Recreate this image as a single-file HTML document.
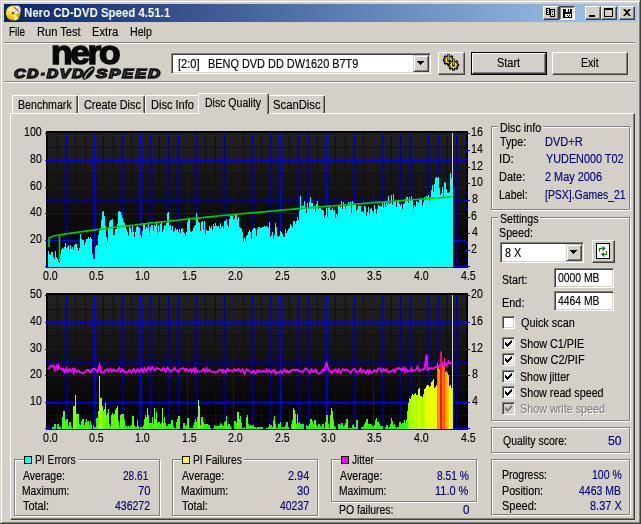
<!DOCTYPE html>
<html><head><meta charset="utf-8"><title>Nero CD-DVD Speed 4.51.1</title>
<style>
html,body{margin:0;padding:0}
body{width:641px;height:524px;overflow:hidden;background:#d4d0c8;position:relative;font-family:"Liberation Sans",sans-serif;font-size:11px;color:#000;line-height:13px}
.a{position:absolute;white-space:nowrap}
.t{position:absolute;white-space:nowrap;height:13px;line-height:13px;font-size:12px;transform-origin:0 0;-webkit-text-stroke:.15px}
.b{color:#00007b}
.r{text-align:right;transform-origin:100% 50% !important}
.ch{position:absolute;left:0;top:0}
.hl{position:absolute;height:1px}
.grp{position:absolute;box-sizing:border-box;border:1px solid #808080;box-shadow:1px 1px 0 #fff, inset 1px 1px 0 #fff}
.btn{position:absolute;box-sizing:border-box;background:#d4d0c8;border:1px solid;border-color:#fff #404040 #404040 #fff;box-shadow:inset -1px -1px 0 #808080, inset 1px 1px 0 #d4d0c8}
.sunk{position:absolute;box-sizing:border-box;background:#fff;border:1px solid;border-color:#808080 #fff #fff #808080;box-shadow:inset 1px 1px 0 #404040, inset -1px -1px 0 #d4d0c8}
.cb{position:absolute;box-sizing:border-box;width:13px;height:13px;background:#fff;border:1px solid;border-color:#808080 #fff #fff #808080;box-shadow:inset 1px 1px 0 #404040, inset -1px -1px 0 #d4d0c8}

.tab{position:absolute;box-sizing:border-box;background:#d4d0c8;border:1px solid;border-color:#fff #404040 transparent #fff;border-bottom:none;border-radius:2px 2px 0 0;box-shadow:inset -1px 0 0 #808080}
.tab.sel{z-index:2}
.sq{position:absolute;width:8px;height:8px;border:1px solid #000;box-sizing:border-box}
.gap{position:absolute;height:2px;background:#d4d0c8}
.btn2{position:absolute;box-sizing:border-box;background:#d4d0c8;border:1px solid;border-color:#d4d0c8 #404040 #404040 #d4d0c8;box-shadow:inset 1px 1px 0 #fff, inset -1px -1px 0 #808080}
.cb.dis{background:#d4d0c8}
</style></head><body>
<!-- window frame -->
<div class="a" style="left:0;top:0;width:640px;height:523px;border-right:1px solid #404040;border-bottom:1px solid #404040"></div>
<div class="a" style="left:1px;top:1px;width:638px;height:521px;border-top:1px solid #fff;border-left:1px solid #fff;border-right:1px solid #808080;border-bottom:1px solid #808080;box-sizing:border-box;width:639px;height:522px"></div>
<!-- title bar -->
<div class="a" style="left:4px;top:4px;width:633px;height:18px;background:linear-gradient(90deg,#0a246a,#a6caf0)"></div>
<div class="a" id="ttl" style="will-change:transform;left:24px;top:5px;height:16px;line-height:16px;font-size:13px;font-weight:bold;color:#fff;transform-origin:0 50%;transform:scaleX(.88)">Nero CD-DVD Speed 4.51.1</div>
<svg class="a" style="left:5px;top:4px" width="17" height="18" viewBox="0 0 17 18"><defs><radialGradient id="gd" cx=".35" cy=".35" r=".8"><stop offset="0" stop-color="#fff27a"/><stop offset=".55" stop-color="#f4c400"/><stop offset="1" stop-color="#b87f00"/></radialGradient></defs><circle cx="8.2" cy="9" r="7.4" fill="url(#gd)"/><path d="M8.2 9L1.5 6A7.4 7.4 0 0 1 6 2Z" fill="#fff68c" opacity=".8"/><path d="M8.2 9L14 14.5A7.4 7.4 0 0 1 9 16.4Z" fill="#fff68c" opacity=".8"/><circle cx="8.2" cy="9" r="1.3" fill="#3a3a5a"/><circle cx="11.6" cy="5.6" r="4.1" fill="#e8e4e0"/><circle cx="11.6" cy="5.6" r="3" fill="#fff"/><path d="M9.3 3.2L13.8 7.6" stroke="#e03010" stroke-width="1.3"/><circle cx="10" cy="7.4" r=".7" fill="#f07040"/><circle cx="13.6" cy="4" r=".7" fill="#f07040"/></svg>
<!-- caption buttons -->
<div class="btn" style="left:543px;top:6px;width:16px;height:14px"></div>
<div class="a" style="left:559px;top:6px;width:16px;height:14px;box-sizing:border-box;background:#ebe9e5;border:1px solid;border-color:#404040 #fff #fff #404040;box-shadow:inset 1px 1px 0 #808080"></div>
<div class="btn" style="left:585px;top:6px;width:16px;height:14px"></div>
<div class="btn" style="left:601px;top:6px;width:16px;height:14px"></div>
<div class="btn" style="left:619px;top:6px;width:16px;height:14px"></div>
<svg class="a" style="left:543px;top:6px" width="92" height="14" viewBox="543 6 92 14" shape-rendering="crispEdges"><path d="M589 15h6v2h-6zM604 8h9v9h-9zM605 10v6h7v-6z" fill="#000" fill-rule="evenodd"/><path d="M623 9h2l2 2 2-2h2l-3 3.5 3 3.500h-2l-2-2-2 2h-2l3-3.500z" fill="#000" shape-rendering="auto"/><path d="M546 8h4v7h-4zM547 9v5h2v-5zM547 10h1v1h-1zM547 12h1v1h-1zM550 9h5v8h-5zM551 10v6h3v-6zM552 11h1v1h-1zM552 14h1v1h-1z" fill="#000" fill-rule="evenodd"/><path d="M563 9h9v9h-9zM566 9h2v3h-2zM569 9h1v3h-1zM565 14h6v3h-6zM567 15h1v1h-1zM569 15h1v1h-1zM568 16h1v1h-1z" fill="#000" fill-rule="evenodd"/></svg>
<!-- menu -->




<div class="hl" style="left:4px;top:42px;width:631px;background:#808080"></div>
<div class="hl" style="left:4px;top:43px;width:631px;background:#fff"></div>
<div class="hl" style="left:4px;top:81px;width:631px;background:#808080"></div>
<div class="hl" style="left:4px;top:82px;width:631px;background:#fff"></div>
<!-- logo -->
<div class="a" id="nero" style="will-change:transform;left:51px;top:35px;font-size:33px;line-height:35px;font-weight:bold;letter-spacing:-2.2px;color:#0a0a0a;-webkit-text-stroke:1.5px #0a0a0a;text-shadow:0 0 2px #f4f2ee;transform-origin:0 0;transform:scaleX(1.07)">nero</div>
<div class="a" id="cds" style="will-change:transform;left:14px;top:67px;font-size:12.500px;line-height:15px;font-weight:bold;font-style:italic;letter-spacing:1.2px;color:#606060;-webkit-text-stroke:1.35px #101010;transform-origin:0 0;transform:scaleX(1.27)">CD&middot;DVD</div>
<div class="a" id="spd" style="will-change:transform;left:96px;top:67px;font-size:12.500px;line-height:15px;font-weight:bold;font-style:italic;letter-spacing:1.2px;color:#606060;-webkit-text-stroke:1.35px #101010;transform-origin:0 0;transform:scaleX(1.36)">SPEED</div>
<svg class="a" style="left:79px;top:65px" width="19" height="16" viewBox="79 65 19 16"><ellipse cx="88.500" cy="73" rx="8.300" ry="3.700" transform="rotate(-48 88.500 73)" fill="#111"/><path d="M84.500 78.500C86 74.500 89 71 93 68.300" stroke="#d4d0c8" stroke-width="1.300" fill="none"/></svg>
<!-- toolbar -->
<div class="sunk" style="left:171px;top:53px;width:260px;height:21px"></div>

<div class="btn2" style="left:413px;top:55px;width:16px;height:17px"></div>
<div class="btn" style="left:438px;top:52px;width:27px;height:23px"></div>
<div class="a" style="left:471px;top:52px;width:76px;height:23px;border:1px solid #000;box-sizing:border-box"></div>
<div class="btn" style="left:472px;top:53px;width:74px;height:21px"></div>

<div class="btn" style="left:552px;top:52px;width:76px;height:23px"></div>

<!-- tab page -->
<div class="a" style="left:10px;top:113px;width:625px;height:407px;box-sizing:border-box;border:1px solid;border-color:#fff #404040 #404040 #fff;box-shadow:inset -1px -1px 0 #808080"></div>
<svg class="ch" width="641" height="524" viewBox="0 0 641 524" shape-rendering="crispEdges">
<defs><linearGradient id="bga" x1="0" y1="0" x2="0" y2="1"><stop offset="0" stop-color="#222"/><stop offset="1" stop-color="#000"/></linearGradient><linearGradient id="bgb" x1="0" y1="0" x2="0" y2="1"><stop offset="0" stop-color="#222"/><stop offset="1" stop-color="#000"/></linearGradient></defs>
<rect x="46" y="131" width="422" height="137" fill="#000"/>
<rect x="48" y="133" width="418" height="134" fill="url(#bga)"/>
<path d="M57 133v134M66 133v134M75 133v134M85 133v134M94 133v134M103 133v134M113 133v134M122 133v134M131 133v134M140 133v134M150 133v134M159 133v134M168 133v134M178 133v134M187 133v134M196 133v134M205 133v134M215 133v134M224 133v134M233 133v134M243 133v134M252 133v134M261 133v134M270 133v134M280 133v134M289 133v134M298 133v134M308 133v134M317 133v134M326 133v134M335 133v134M345 133v134M354 133v134M363 133v134M373 133v134M382 133v134M391 133v134M400 133v134M410 133v134M419 133v134M428 133v134M438 133v134M447 133v134M456 133v134" stroke="#000090" stroke-width="1" transform="translate(.5,0)"/>
<path d="M94 133v134M140 133v134M187 133v134M233 133v134M280 133v134M326 133v134M373 133v134M419 133v134" stroke="#0000ff" stroke-width="1" transform="translate(.5,0)"/>
<path d="M46 266h420M46 253h420M46 240h420M46 227h420M46 213h420M46 200h420M46 187h420M46 173h420M46 160h420M46 147h420M46 133h420" stroke="#000090" stroke-width="1" transform="translate(0,.5)"/>
<path d="M45 266h421M45 240h421M45 213h421M45 187h421M45 160h421M45 133h421" stroke="#0000ff" stroke-width="1" transform="translate(0,.5)"/>
<path d="M466 266h4M466 258h2M466 250h4M466 242h2M466 233h4M466 225h2M466 217h4M466 208h2M466 200h4M466 192h2M466 183h4M466 175h2M466 167h4M466 158h2M466 150h4M466 142h2M466 133h4" stroke="#0000ff" stroke-width="1" transform="translate(0,.5)"/>
<rect x="452" y="133" width="1" height="134" fill="#d0d0d0"/>
<path d="M48 267V251h1V254h1V255h1V252h1V252h1V257h1V259h1V251h1V257h1V259h1V262h1V263h1V254h1V250h1V248h1V249h1V247h1V243h1V248h1V247h1V245h1V250h1V245h1V249h1V247h1V250h1V245h1V244h1V244h1V248h1V251h1V248h1V234h1V239h1V240h1V240h1V245h1V242h1V239h1V239h1V237h1V239h1V237h1V239h1V254h1V259h1V259h1V247h1V245h1V246h1V235h1V231h1V228h1V220h1V212h1V211h1V216h1V226h1V237h1V242h1V227h1V222h1V220h1V220h1V219h1V235h1V235h1V229h1V229h1V224h1V212h1V211h1V212h1V215h1V218h1V222h1V223h1V227h1V229h1V232h1V236h1V226h1V228h1V232h1V226h1V232h1V237h1V232h1V227h1V226h1V227h1V228h1V235h1V238h1V231h1V223h1V223h1V229h1V227h1V228h1V224h1V233h1V227h1V225h1V225h1V231h1V225h1V226h1V223h1V233h1V225h1V232h1V224h1V222h1V232h1V229h1V225h1V226h1V223h1V213h1V212h1V226h1V225h1V230h1V226h1V232h1V231h1V228h1V230h1V229h1V232h1V229h1V233h1V229h1V228h1V232h1V233h1V236h1V232h1V222h1V218h1V219h1V231h1V232h1V231h1V228h1V226h1V225h1V213h1V219h1V222h1V223h1V231h1V222h1V221h1V230h1V221h1V235h1V230h1V231h1V231h1V226h1V228h1V226h1V230h1V224h1V226h1V223h1V226h1V227h1V226h1V229h1V223h1V228h1V226h1V229h1V221h1V221h1V219h1V225h1V227h1V219h1V216h1V216h1V216h1V220h1V219h1V215h1V215h1V220h1V217h1V227h1V228h1V229h1V232h1V242h1V238h1V241h1V236h1V235h1V232h1V230h1V232h1V239h1V230h1V228h1V228h1V229h1V236h1V229h1V227h1V227h1V228h1V228h1V227h1V227h1V226h1V227h1V226h1V227h1V228h1V222h1V237h1V235h1V232h1V239h1V235h1V223h1V227h1V236h1V237h1V236h1V231h1V232h1V234h1V237h1V237h1V229h1V233h1V231h1V229h1V228h1V224h1V226h1V228h1V221h1V221h1V224h1V221h1V217h1V220h1V211h1V196h1V207h1V206h1V206h1V201h1V209h1V213h1V203h1V208h1V202h1V197h1V203h1V203h1V209h1V206h1V212h1V204h1V201h1V209h1V208h1V208h1V210h1V210h1V211h1V218h1V215h1V208h1V217h1V208h1V207h1V210h1V210h1V208h1V211h1V210h1V218h1V214h1V217h1V205h1V206h1V207h1V201h1V209h1V202h1V204h1V209h1V206h1V206h1V202h1V204h1V202h1V213h1V201h1V204h1V204h1V205h1V211h1V209h1V206h1V206h1V206h1V212h1V211h1V213h1V206h1V207h1V216h1V212h1V207h1V214h1V209h1V208h1V211h1V213h1V205h1V209h1V214h1V209h1V205h1V206h1V206h1V207h1V203h1V208h1V202h1V207h1V202h1V205h1V196h1V204h1V203h1V195h1V205h1V194h1V202h1V201h1V207h1V200h1V201h1V204h1V206h1V204h1V209h1V204h1V203h1V199h1V197h1V197h1V203h1V197h1V199h1V196h1V199h1V209h1V205h1V207h1V201h1V202h1V203h1V199h1V198h1V199h1V206h1V202h1V197h1V199h1V196h1V197h1V195h1V201h1V197h1V190h1V185h1V192h1V184h1V178h1V177h1V178h1V177h1V188h1V195h1V193h1V187h1V198h1V182h1V183h1V189h1V193h1V193h1V192h1V173h1V178h1V186h1V267Z" fill="#00ffff"/>
<path d="M49 247 L49 238 L51 237 L53 236.0 L56 235.5 L59 235.1 L62 234.6 L65 234.1 L68 233.7 L71 233.2 L74 232.8 L77 232.4 L80 231.9 L83 231.5 L86 231.1 L89 230.7 L92 230.3 L95 229.9 L98 229.5 L101 229.1 L104 228.7 L107 228.3 L110 227.9 L113 227.5 L116 227.2 L119 226.8 L122 226.4 L125 226.1 L128 225.7 L131 225.3 L134 225.0 L137 224.6 L140 224.3 L143 223.9 L146 223.6 L149 223.2 L152 222.9 L155 222.6 L158 222.2 L161 221.9 L164 221.6 L167 221.3 L170 220.9 L173 220.6 L176 220.3 L179 220.0 L182 219.7 L185 219.3 L188 219.0 L191 218.7 L194 218.4 L197 218.1 L200 217.8 L203 217.5 L206 217.2 L209 216.9 L212 216.6 L215 216.3 L218 216.0 L221 215.7 L224 215.4 L227 215.2 L230 214.9 L233 214.6 L236 214.3 L239 214.0 L242 213.7 L245 213.5 L248 213.2 L251 212.9 L254 212.6 L257 212.4 L260 212.1 L263 211.8 L266 211.6 L269 211.3 L272 211.0 L275 210.8 L278 210.5 L281 210.2 L284 210.0 L287 209.7 L290 209.5 L293 209.2 L296 208.9 L299 208.7 L302 208.4 L305 208.2 L308 207.9 L311 207.7 L314 207.4 L317 207.2 L320 206.9 L323 206.7 L326 206.4 L329 206.2 L332 206.0 L335 205.7 L338 205.5 L341 205.2 L344 205.0 L347 204.8 L350 204.5 L353 204.3 L356 204.0 L359 203.8 L362 203.6 L365 203.3 L368 203.1 L371 202.9 L374 202.6 L377 202.4 L380 202.2 L383 202.0 L386 201.7 L389 201.5 L392 201.3 L395 201.1 L398 200.8 L401 200.6 L404 200.4 L407 200.2 L410 199.9 L413 199.7 L416 199.5 L419 199.3 L422 199.1 L425 198.8 L428 198.6 L431 198.4 L434 198.2 L437 198.0 L440 197.8 L443 197.6 L446 197.3 L449 197.1 L452 196.9" fill="none" stroke="#00cc00" stroke-width="1.7" shape-rendering="auto"/>
<path d="M59.5 236V261" fill="none" stroke="#00cc00" stroke-width="1.7" shape-rendering="auto"/>
<rect x="46" y="293" width="422" height="137" fill="#000"/>
<rect x="48" y="295" width="418" height="134" fill="url(#bgb)"/>
<path d="M57 295v134M66 295v134M75 295v134M85 295v134M94 295v134M103 295v134M113 295v134M122 295v134M131 295v134M140 295v134M150 295v134M159 295v134M168 295v134M178 295v134M187 295v134M196 295v134M205 295v134M215 295v134M224 295v134M233 295v134M243 295v134M252 295v134M261 295v134M270 295v134M280 295v134M289 295v134M298 295v134M308 295v134M317 295v134M326 295v134M335 295v134M345 295v134M354 295v134M363 295v134M373 295v134M382 295v134M391 295v134M400 295v134M410 295v134M419 295v134M428 295v134M438 295v134M447 295v134M456 295v134" stroke="#000090" stroke-width="1" transform="translate(.5,0)"/>
<path d="M94 295v134M140 295v134M187 295v134M233 295v134M280 295v134M326 295v134M373 295v134M419 295v134" stroke="#0000ff" stroke-width="1" transform="translate(.5,0)"/>
<path d="M46 428h420M46 415h420M46 402h420M46 389h420M46 375h420M46 362h420M46 349h420M46 335h420M46 322h420M46 309h420M46 295h420" stroke="#000090" stroke-width="1" transform="translate(0,.5)"/>
<path d="M45 428h421M45 402h421M45 375h421M45 349h421M45 322h421M45 295h421" stroke="#0000ff" stroke-width="1" transform="translate(0,.5)"/>
<path d="M466 428h4M466 415h2M466 402h4M466 389h2M466 375h4M466 362h2M466 349h4M466 335h2M466 322h4M466 309h2M466 295h4" stroke="#0000ff" stroke-width="1" transform="translate(0,.5)"/>
<rect x="452" y="295" width="1" height="134" fill="#d0d0d0"/>
<path d="M52 429v-2h1v2zM53 429v-2h1v2zM59 429v-2h1v2zM60 429v-2h1v2zM71 429v-2h1v2zM94 429v-2h1v2zM95 429v-2h1v2zM127 429v-2h1v2zM129 429v-2h1v2zM135 429v-2h1v2zM136 429v-2h1v2zM140 429v-2h1v2zM141 429v-2h1v2zM142 429v-2h1v2zM244 429v-2h1v2zM254 429v-2h1v2zM255 429v-2h1v2zM257 429v-2h1v2zM258 429v-2h1v2zM259 429v-2h1v2zM260 429v-2h1v2zM261 429v-2h1v2zM262 429v-2h1v2zM268 429v-2h1v2zM272 429v-2h1v2zM282 429v-2h1v2zM283 429v-2h1v2zM284 429v-2h1v2zM288 429v-2h1v2zM317 429v-2h1v2zM321 429v-2h1v2zM335 429v-2h1v2zM343 429v-2h1v2zM354 429v-2h1v2zM355 429v-2h1v2zM361 429v-2h1v2zM362 429v-2h1v2zM373 429v-2h1v2zM385 429v-2h1v2zM389 429v-2h1v2zM395 429v-2h1v2zM397 429v-2h1v2zM398 429v-2h1v2z" fill="#0aff00"/>
<path d="M54 429v-5h1v5zM55 429v-5h1v5zM57 429v-5h1v5zM58 429v-5h1v5zM79 429v-5h1v5zM109 429v-5h1v5zM153 429v-5h1v5zM160 429v-5h1v5zM168 429v-5h1v5zM169 429v-5h1v5zM170 429v-5h1v5zM204 429v-5h1v5zM205 429v-5h1v5zM206 429v-5h1v5zM207 429v-5h1v5zM221 429v-5h1v5zM228 429v-5h1v5zM229 429v-5h1v5zM248 429v-5h1v5zM269 429v-5h1v5zM275 429v-5h1v5zM278 429v-5h1v5zM279 429v-5h1v5zM291 429v-5h1v5zM296 429v-5h1v5zM300 429v-5h1v5zM301 429v-5h1v5zM302 429v-5h1v5zM303 429v-5h1v5zM309 429v-5h1v5zM313 429v-5h1v5zM318 429v-5h1v5zM319 429v-5h1v5zM322 429v-5h1v5zM323 429v-5h1v5zM328 429v-5h1v5zM338 429v-5h1v5zM339 429v-5h1v5zM353 429v-5h1v5zM364 429v-5h1v5zM368 429v-5h1v5zM369 429v-5h1v5zM370 429v-5h1v5zM379 429v-5h1v5zM390 429v-5h1v5zM394 429v-5h1v5zM401 429v-5h1v5z" fill="#1aff00"/>
<path d="M62 429v-12h1v12zM146 429v-12h1v12zM152 429v-12h1v12zM164 429v-12h1v12zM197 429v-12h1v12zM201 429v-12h1v12zM202 429v-12h1v12zM246 429v-12h1v12z" fill="#3fff00"/>
<path d="M63 429v-18h1v18zM64 429v-18h1v18zM98 429v-18h1v18zM103 429v-18h1v18zM332 429v-18h1v18zM407 429v-18h1v18z" fill="#5fff00"/>
<path d="M65 429v-8h1v8zM81 429v-8h1v8zM88 429v-8h1v8zM90 429v-8h1v8zM118 429v-8h1v8zM225 429v-8h1v8zM234 429v-8h1v8zM235 429v-8h1v8zM312 429v-8h1v8zM392 429v-8h1v8z" fill="#2aff00"/>
<path d="M66 429v-10h1v10zM67 429v-10h1v10zM82 429v-10h1v10zM83 429v-10h1v10zM86 429v-10h1v10zM144 429v-10h1v10zM155 429v-10h1v10zM177 429v-10h1v10zM195 429v-10h1v10zM239 429v-10h1v10zM310 429v-10h1v10zM311 429v-10h1v10zM346 429v-10h1v10zM347 429v-10h1v10zM366 429v-10h1v10zM367 429v-10h1v10z" fill="#35ff00"/>
<path d="M68 429v-3h1v3zM110 429v-3h1v3zM119 429v-3h1v3zM125 429v-3h1v3zM126 429v-3h1v3zM128 429v-3h1v3zM130 429v-3h1v3zM134 429v-3h1v3zM138 429v-3h1v3zM166 429v-3h1v3zM167 429v-3h1v3zM173 429v-3h1v3zM185 429v-3h1v3zM215 429v-3h1v3zM216 429v-3h1v3zM217 429v-3h1v3zM218 429v-3h1v3zM219 429v-3h1v3zM223 429v-3h1v3zM227 429v-3h1v3zM230 429v-3h1v3zM249 429v-3h1v3zM251 429v-3h1v3zM307 429v-3h1v3zM308 429v-3h1v3zM320 429v-3h1v3zM334 429v-3h1v3zM363 429v-3h1v3zM372 429v-3h1v3zM380 429v-3h1v3zM381 429v-3h1v3zM382 429v-3h1v3z" fill="#0fff00"/>
<path d="M69 429v-7h1v7zM70 429v-7h1v7zM85 429v-7h1v7zM87 429v-7h1v7zM158 429v-7h1v7zM159 429v-7h1v7zM176 429v-7h1v7zM194 429v-7h1v7zM196 429v-7h1v7zM203 429v-7h1v7zM224 429v-7h1v7zM280 429v-7h1v7zM286 429v-7h1v7zM287 429v-7h1v7zM299 429v-7h1v7zM325 429v-7h1v7zM365 429v-7h1v7zM377 429v-7h1v7zM378 429v-7h1v7zM399 429v-7h1v7zM400 429v-7h1v7z" fill="#25ff00"/>
<path d="M72 429v-1h1v1zM139 429v-1h1v1zM174 429v-1h1v1zM175 429v-1h1v1zM189 429v-1h1v1zM190 429v-1h1v1zM191 429v-1h1v1zM192 429v-1h1v1zM210 429v-1h1v1zM213 429v-1h1v1zM231 429v-1h1v1zM242 429v-1h1v1zM243 429v-1h1v1zM256 429v-1h1v1zM266 429v-1h1v1zM267 429v-1h1v1zM276 429v-1h1v1zM277 429v-1h1v1zM281 429v-1h1v1zM324 429v-1h1v1zM329 429v-1h1v1zM348 429v-1h1v1zM349 429v-1h1v1zM350 429v-1h1v1zM351 429v-1h1v1zM388 429v-1h1v1zM396 429v-1h1v1z" fill="#05ff00"/>
<path d="M73 429v-23h1v23zM74 429v-23h1v23zM102 429v-23h1v23zM117 429v-23h1v23zM199 429v-23h1v23z" fill="#7aff00"/>
<path d="M75 429v-34h1v34zM413 429v-34h1v34zM416 429v-34h1v34zM417 429v-34h1v34z" fill="#b5ff00"/>
<path d="M76 429v-15h1v15zM77 429v-15h1v15zM78 429v-15h1v15zM114 429v-15h1v15zM121 429v-15h1v15zM122 429v-15h1v15zM123 429v-15h1v15zM295 429v-15h1v15zM297 429v-15h1v15z" fill="#4fff00"/>
<path d="M80 429v-4h1v4zM84 429v-4h1v4zM89 429v-4h1v4zM91 429v-4h1v4zM93 429v-4h1v4zM131 429v-4h1v4zM143 429v-4h1v4zM186 429v-4h1v4zM193 429v-4h1v4zM200 429v-4h1v4zM208 429v-4h1v4zM209 429v-4h1v4zM214 429v-4h1v4zM222 429v-4h1v4zM250 429v-4h1v4zM252 429v-4h1v4zM253 429v-4h1v4zM270 429v-4h1v4zM271 429v-4h1v4zM285 429v-4h1v4zM306 429v-4h1v4zM316 429v-4h1v4zM340 429v-4h1v4zM344 429v-4h1v4zM352 429v-4h1v4zM371 429v-4h1v4zM374 429v-4h1v4zM386 429v-4h1v4zM387 429v-4h1v4zM393 429v-4h1v4z" fill="#15ff00"/>
<path d="M96 429v-11h1v11zM97 429v-11h1v11zM187 429v-11h1v11zM188 429v-11h1v11zM376 429v-11h1v11zM391 429v-11h1v11z" fill="#3aff00"/>
<path d="M99 429v-53h1v53z" fill="#ffd600"/>
<path d="M100 429v-31h1v31zM101 429v-31h1v31zM409 429v-31h1v31z" fill="#a5ff00"/>
<path d="M104 429v-20h1v20zM108 429v-20h1v20z" fill="#6aff00"/>
<path d="M105 429v-26h1v26zM408 429v-26h1v26z" fill="#8aff00"/>
<path d="M106 429v-14h1v14zM111 429v-14h1v14zM113 429v-14h1v14zM120 429v-14h1v14zM145 429v-14h1v14zM148 429v-14h1v14zM247 429v-14h1v14zM326 429v-14h1v14zM327 429v-14h1v14zM330 429v-14h1v14z" fill="#4aff00"/>
<path d="M107 429v-16h1v16zM112 429v-16h1v16z" fill="#55ff00"/>
<path d="M115 429v-19h1v19zM294 429v-19h1v19z" fill="#65ff00"/>
<path d="M116 429v-21h1v21zM147 429v-21h1v21zM154 429v-21h1v21zM162 429v-21h1v21zM293 429v-21h1v21zM331 429v-21h1v21z" fill="#6fff00"/>
<path d="M124 429v-9h1v9zM137 429v-9h1v9zM171 429v-9h1v9zM172 429v-9h1v9zM273 429v-9h1v9zM292 429v-9h1v9zM314 429v-9h1v9zM315 429v-9h1v9zM333 429v-9h1v9zM356 429v-9h1v9zM357 429v-9h1v9zM375 429v-9h1v9zM404 429v-9h1v9zM406 429v-9h1v9z" fill="#2fff00"/>
<path d="M132 429v-13h1v13zM133 429v-13h1v13zM178 429v-13h1v13zM179 429v-13h1v13zM226 429v-13h1v13zM240 429v-13h1v13zM274 429v-13h1v13z" fill="#45ff00"/>
<path d="M149 429v-6h1v6zM150 429v-6h1v6zM151 429v-6h1v6zM157 429v-6h1v6zM161 429v-6h1v6zM163 429v-6h1v6zM165 429v-6h1v6zM183 429v-6h1v6zM184 429v-6h1v6zM220 429v-6h1v6zM236 429v-6h1v6zM241 429v-6h1v6zM298 429v-6h1v6zM341 429v-6h1v6zM342 429v-6h1v6zM345 429v-6h1v6zM402 429v-6h1v6zM403 429v-6h1v6zM405 429v-6h1v6z" fill="#1fff00"/>
<path d="M156 429v-17h1v17zM237 429v-17h1v17zM238 429v-17h1v17z" fill="#5aff00"/>
<path d="M198 429v-29h1v29z" fill="#9aff00"/>
<path d="M410 429v-30h1v30z" fill="#9fff00"/>
<path d="M411 429v-33h1v33zM420 429v-33h1v33zM421 429v-33h1v33z" fill="#afff00"/>
<path d="M412 429v-35h1v35zM414 429v-35h1v35zM423 429v-35h1v35z" fill="#baff00"/>
<path d="M415 429v-36h1v36z" fill="#bfff00"/>
<path d="M418 429v-40h1v40zM424 429v-40h1v40z" fill="#d5ff00"/>
<path d="M419 429v-41h1v41zM425 429v-41h1v41zM434 429v-41h1v41zM451 429v-41h1v41z" fill="#daff00"/>
<path d="M422 429v-32h1v32z" fill="#aaff00"/>
<path d="M426 429v-43h1v43zM430 429v-43h1v43zM449 429v-43h1v43z" fill="#e5ff00"/>
<path d="M427 429v-44h1v44zM428 429v-44h1v44zM436 429v-44h1v44zM450 429v-44h1v44z" fill="#eaff00"/>
<path d="M429 429v-42h1v42zM435 429v-42h1v42z" fill="#dfff00"/>
<path d="M431 429v-47h1v47z" fill="#faff00"/>
<path d="M432 429v-48h1v48z" fill="#fffe00"/>
<path d="M433 429v-50h1v50z" fill="#ffee00"/>
<path d="M437 429v-66h1v66zM443 429v-66h1v66z" fill="#ff6e00"/>
<path d="M438 429v-62h1v62z" fill="#ff8e00"/>
<path d="M439 429v-60h1v60z" fill="#ff9e00"/>
<path d="M440 429v-78h1v78z" fill="#ff0e00"/>
<path d="M441 429v-77h1v77z" fill="#ff1600"/>
<path d="M442 429v-65h1v65z" fill="#ff7600"/>
<path d="M444 429v-71h1v71z" fill="#ff4600"/>
<path d="M445 429v-57h1v57z" fill="#ffb600"/>
<path d="M446 429v-58h1v58z" fill="#ffae00"/>
<path d="M447 429v-56h1v56z" fill="#ffbe00"/>
<path d="M448 429v-54h1v54z" fill="#ffce00"/>
<path d="M452 429v-39h1v39z" fill="#cfff00"/>
<path d="M48.5 369.3 L50.5 365.7 L52.5 366.2 L53.5 365.4 L54.5 369.6 L56.5 366.0 L57.5 368.7 L58.5 365.6 L59.5 368.5 L61.5 368.4 L62.5 369.9 L63.5 368.9 L64.5 372.0 L66.5 368.4 L67.5 371.8 L69.5 369.2 L70.5 371.3 L72.5 369.1 L73.5 372.5 L74.5 368.9 L76.5 371.8 L78.5 370.5 L79.5 372.1 L81.5 372.9 L83.5 373.0 L85.5 371.7 L86.5 370.1 L88.5 369.9 L90.5 372.3 L92.5 369.1 L94.5 368.8 L95.5 369.6 L97.5 372.0 L99.5 365.0 L101.5 372.8 L103.5 372.4 L105.5 370.0 L107.5 369.1 L108.5 371.3 L110.5 368.8 L111.5 371.6 L113.5 369.3 L115.5 370.8 L117.5 371.5 L118.5 369.1 L119.5 368.0 L120.5 371.6 L122.5 369.4 L124.5 371.7 L125.5 372.5 L127.5 372.2 L129.5 369.9 L131.5 372.6 L133.5 368.9 L135.5 372.5 L137.5 369.2 L139.5 371.9 L141.5 368.6 L143.5 371.9 L144.5 368.3 L146.5 371.1 L148.5 367.5 L150.5 370.1 L152.5 367.1 L154.5 370.4 L156.5 368.0 L157.5 368.4 L159.5 369.1 L161.5 370.5 L163.5 367.7 L165.5 371.9 L167.5 367.7 L168.5 368.8 L170.5 371.8 L171.5 370.5 L173.5 369.3 L174.5 367.8 L176.5 370.5 L178.5 371.7 L179.5 369.1 L181.5 368.8 L183.5 368.0 L185.5 371.1 L186.5 369.0 L188.5 371.0 L190.5 368.9 L191.5 371.9 L193.5 368.7 L194.5 371.5 L195.5 368.4 L197.5 371.7 L199.5 371.5 L201.5 371.0 L203.5 368.8 L204.5 371.3 L206.5 368.1 L207.5 371.4 L209.5 369.6 L211.5 372.0 L213.5 371.5 L215.5 372.3 L217.5 371.7 L219.5 369.6 L221.5 369.8 L222.5 372.0 L223.5 370.1 L225.5 372.4 L227.5 369.0 L228.5 370.5 L230.5 370.1 L232.5 371.6 L234.5 369.3 L236.5 370.8 L238.5 369.0 L240.5 371.6 L242.5 369.5 L244.5 373.3 L246.5 369.5 L248.5 370.3 L249.5 370.9 L251.5 372.9 L253.5 370.6 L255.5 373.4 L257.5 370.1 L259.5 371.9 L260.5 370.8 L261.5 371.8 L263.5 370.8 L265.5 371.9 L266.5 369.8 L267.5 372.0 L269.5 370.2 L270.5 372.6 L271.5 372.2 L273.5 370.3 L274.5 369.9 L275.5 373.5 L276.5 372.0 L278.5 372.8 L280.5 371.0 L282.5 373.0 L284.5 369.4 L286.5 372.5 L287.5 370.9 L289.5 372.6 L290.5 370.7 L292.5 369.8 L294.5 369.7 L295.5 370.4 L297.5 369.5 L299.5 371.2 L301.5 371.9 L302.5 372.3 L304.5 369.5 L305.5 368.2 L307.5 369.9 L309.5 372.7 L311.5 369.3 L313.5 372.1 L315.5 369.5 L317.5 373.3 L319.5 373.7 L320.5 372.7 L321.5 372.2 L322.5 369.4 L324.5 370.4 L326.5 362.0 L328.5 370.4 L330.5 370.7 L331.5 373.4 L333.5 370.5 L335.5 369.5 L337.5 372.6 L338.5 369.5 L340.5 373.0 L342.5 369.2 L343.5 369.6 L345.5 370.4 L346.5 369.4 L348.5 370.6 L350.5 372.9 L352.5 369.8 L354.5 368.8 L356.5 371.9 L358.5 371.6 L360.5 368.8 L361.5 372.3 L363.5 370.5 L365.5 373.0 L367.5 370.3 L368.5 372.8 L369.5 370.4 L370.5 372.2 L371.5 372.8 L373.5 371.2 L374.5 370.0 L376.5 371.8 L378.5 368.4 L379.5 368.3 L380.5 368.5 L381.5 371.8 L383.5 369.0 L385.5 371.1 L386.5 369.4 L388.5 372.6 L390.5 371.3 L391.5 371.2 L393.5 369.5 L394.5 371.9 L396.5 368.4 L398.5 368.3 L399.5 368.1 L401.5 370.5 L403.5 367.9 L404.5 371.4 L405.5 368.4 L407.5 371.7 L409.5 370.6 L410.5 370.5 L411.5 368.3 L412.5 370.9 L414.5 370.5 L416.5 369.4 L417.5 366.8 L419.5 370.8 L421.5 369.8 L422.5 369.3 L423.5 369.8 L424.5 368.7 L426.5 354.5 L427.5 369.8 L429.5 368.2 L430.5 368.2 L432.5 368.3 L433.5 368.7 L435.5 366.8 L437.5 366.3 L438.5 366.5 L440.5 365.1 L442.5 363.1 L443.5 365.4 L444.5 362.1 L446.5 365.5 L448.5 361.4 L449.5 363.5 L450.5 362.9 L452.5 363.1" fill="none" stroke="#ff00ff" stroke-width="1.8" stroke-linejoin="miter" shape-rendering="auto"/>
</svg>

<!-- tabs -->
<div class="tab" style="left:12px;top:95px;width:66px;height:18px"></div>
<div class="tab" style="left:78px;top:95px;width:67px;height:18px"></div>
<div class="tab" style="left:145px;top:95px;width:56px;height:18px"></div>
<div class="tab" style="left:267px;top:95px;width:58px;height:18px"></div>
<div class="tab sel" style="left:198px;top:93px;width:71px;height:21px"></div>
<!-- right panel -->
<div class="grp" style="left:491px;top:126px;width:139px;height:84px"></div>
<div class="gap" style="left:498px;top:126px;width:45px"></div>
<div class="grp" style="left:491px;top:217px;width:139px;height:204px"></div>
<div class="gap" style="left:498px;top:217px;width:42px"></div>
<div class="sunk" style="left:500px;top:242px;width:84px;height:21px"></div>
<div class="btn2" style="left:566px;top:244px;width:16px;height:17px"></div>
<div class="btn" style="left:592px;top:240px;width:23px;height:23px"></div>
<div class="sunk" style="left:554px;top:268px;width:60px;height:20px"></div>
<div class="sunk" style="left:554px;top:291px;width:60px;height:20px"></div>
<div class="cb" style="left:502px;top:316px"></div>
<div class="cb ck" style="left:502px;top:337px"></div>
<div class="cb ck" style="left:502px;top:353px"></div>
<div class="cb ck" style="left:502px;top:370px"></div>
<div class="cb ck" style="left:502px;top:386px"></div>
<div class="cb ck dis" style="left:502px;top:402px"></div>
<div class="grp" style="left:491px;top:427px;width:139px;height:26px"></div>
<div class="grp" style="left:491px;top:459px;width:139px;height:56px"></div>
<!-- bottom stats -->
<div class="grp" style="left:14px;top:459px;width:146px;height:57px"></div>
<div class="gap" style="left:24px;top:459px;width:54px"></div>
<div class="sq" style="left:24px;top:456px;background:#00ffff"></div>
<div class="grp" style="left:172px;top:459px;width:146px;height:57px"></div>
<div class="gap" style="left:182px;top:459px;width:62px"></div>
<div class="sq" style="left:182px;top:456px;background:#ffff00"></div>
<div class="grp" style="left:331px;top:459px;width:146px;height:43px"></div>
<div class="gap" style="left:341px;top:459px;width:35px"></div>
<div class="sq" style="left:341px;top:456px;background:#ff00ff"></div>
<!-- icons -->
<svg class="ch" width="641" height="524" viewBox="0 0 641 524" shape-rendering="crispEdges">
<path d="M417 61h7v1h-7zM418 62h5v1h-5zM419 63h3v1h-3zM420 64h1v1h-1zM570 250h7v1h-7zM571 251h5v1h-5zM572 252h3v1h-3zM573 253h1v1h-1z" fill="#000"/>
<path d="M505 342v3h1v-3zm1 1v3h1v-3zm1 1v3h1v-3zm1 -1v3h1v-3zm1 -1v3h1v-3zm1 -1v3h1v-3zm1 -1v3h1v-3zM505 358v3h1v-3zm1 1v3h1v-3zm1 1v3h1v-3zm1 -1v3h1v-3zm1 -1v3h1v-3zm1 -1v3h1v-3zm1 -1v3h1v-3zM505 375v3h1v-3zm1 1v3h1v-3zm1 1v3h1v-3zm1 -1v3h1v-3zm1 -1v3h1v-3zm1 -1v3h1v-3zm1 -1v3h1v-3zM505 391v3h1v-3zm1 1v3h1v-3zm1 1v3h1v-3zm1 -1v3h1v-3zm1 -1v3h1v-3zm1 -1v3h1v-3zm1 -1v3h1v-3z" fill="#000"/>
<path d="M505 407v3h1v-3zm1 1v3h1v-3zm1 1v3h1v-3zm1 -1v3h1v-3zm1 -1v3h1v-3zm1 -1v3h1v-3zm1 -1v3h1v-3z" fill="#808080"/>
<rect x="596.5" y="243.5" width="13" height="15" fill="#fff" stroke="#000"/>
<g shape-rendering="auto" fill="none" stroke="#008000" stroke-width="1.2"><path d="M599.500 251.500V248.500H603"/><path d="M606.500 251V254.500H604"/></g>
<g shape-rendering="auto" fill="#008000"><path d="M602.500 245.800l3.200 2.700-3.200 2.700z"/><path d="M604.200 251.800l-3.200 2.700 3.200 2.700z"/></g>
<g shape-rendering="auto"><g id="gear"><path d="M453.62 59.11L453.62 60.89L452.10 60.86L451.65 61.93L452.75 62.99L451.49 64.25L450.43 63.15L449.36 63.60L449.39 65.12L447.61 65.12L447.64 63.60L446.57 63.15L445.51 64.25L444.25 62.99L445.35 61.93L444.90 60.86L443.38 60.89L443.38 59.11L444.90 59.14L445.35 58.07L444.25 57.01L445.51 55.75L446.57 56.85L447.64 56.40L447.61 54.88L449.39 54.88L449.36 56.40L450.43 56.85L451.49 55.75L452.75 57.01L451.65 58.07L452.10 59.14Z" fill="#f4f400" stroke="#000" stroke-width="1.1" stroke-linejoin="round"/><circle cx="448.500" cy="60" r="1.700" fill="#000"/><rect x="447.600" y="54.500" width="2" height="6" fill="#a0a0a0" stroke="#303030" stroke-width=".6"/></g><use href="#gear" x="5" y="5"/></g>
</svg>
<div id="txt" style="position:absolute;left:0;top:0;width:641px;height:524px;will-change:transform;z-index:5">
<div class="t" style="left:9.0px;top:26px;transform:scaleX(0.828)">File</div>
<div class="t" style="left:36.5px;top:26px;transform:scaleX(0.926)">Run Test</div>
<div class="t" style="left:91.8px;top:26px;transform:scaleX(0.937)">Extra</div>
<div class="t" style="left:129.7px;top:26px;transform:scaleX(0.887)">Help</div>
<div class="t" style="left:177.8px;top:58px;transform:scaleX(0.923)">[2:0]</div>
<div class="t" style="left:208.1px;top:58px;transform:scaleX(0.909)">BENQ DVD DD DW1620 B7T9</div>
<div class="t" style="left:496.5px;top:57px;transform:scaleX(0.912)">Start</div>
<div class="t" style="left:580.6px;top:57px;transform:scaleX(0.879)">Exit</div>
<div class="t" style="left:17.5px;top:99px;transform:scaleX(0.885)">Benchmark</div>
<div class="t" style="left:83.7px;top:99px;transform:scaleX(0.908)">Create Disc</div>
<div class="t" style="left:150.9px;top:99px;transform:scaleX(0.920)">Disc Info</div>
<div class="t" style="left:205.1px;top:97px;transform:scaleX(0.876);z-index:3">Disc Quality</div>
<div class="t" style="left:272.8px;top:99px;transform:scaleX(0.939)">ScanDisc</div>
<div class="t" style="left:499.8px;top:122px;transform:scaleX(0.893)">Disc info</div>
<div class="t" style="left:500.0px;top:136px;transform:scaleX(0.893)">Type:</div>
<div class="t" style="left:544.9px;top:136px;transform:scaleX(0.921);color:#00007b">DVD+R</div>
<div class="t" style="left:499.0px;top:153px;transform:scaleX(0.962)">ID:</div>
<div class="t" style="left:545.5px;top:153px;transform:scaleX(0.903);color:#00007b">YUDEN000 T02</div>
<div class="t" style="left:499.1px;top:171px;transform:scaleX(0.915)">Date:</div>
<div class="t" style="left:544.9px;top:171px;transform:scaleX(0.908);color:#00007b">2 May 2006</div>
<div class="t" style="left:499.1px;top:189px;transform:scaleX(0.874)">Label:</div>
<div class="t" style="left:544.9px;top:189px;transform:scaleX(0.870);color:#00007b">[PSX].Games_21</div>
<div class="t" style="left:499.8px;top:213px;transform:scaleX(0.888)">Settings</div>
<div class="t" style="left:499.1px;top:227px;transform:scaleX(0.892)">Speed:</div>
<div class="t" style="left:504.5px;top:247px;transform:scaleX(0.900)">8 X</div>
<div class="t" style="left:501.6px;top:274px;transform:scaleX(0.885)">Start:</div>
<div class="t" style="left:557.9px;top:272px;transform:scaleX(0.865)">0000 MB</div>
<div class="t" style="left:501.6px;top:297px;transform:scaleX(0.909)">End:</div>
<div class="t" style="left:557.9px;top:295px;transform:scaleX(0.865)">4464 MB</div>
<div class="t" style="left:520.6px;top:317px;transform:scaleX(0.905)">Quick scan</div>
<div class="t" style="left:519.7px;top:338px;transform:scaleX(0.901)">Show C1/PIE</div>
<div class="t" style="left:519.7px;top:354px;transform:scaleX(0.914)">Show C2/PIF</div>
<div class="t" style="left:519.7px;top:371px;transform:scaleX(0.885)">Show jitter</div>
<div class="t" style="left:519.7px;top:387px;transform:scaleX(0.895)">Show read speed</div>
<div class="t" style="left:519.7px;top:403px;transform:scaleX(0.897);color:#808080;text-shadow:1px 1px 0 #fff">Show write speed</div>
<div class="t" style="left:502.5px;top:435px;transform:scaleX(0.871)">Quality score:</div>
<div class="t" style="left:607.5px;top:435px;transform:scaleX(1.017);color:#00007b">50</div>
<div class="t" style="left:501.6px;top:469px;transform:scaleX(0.873)">Progress:</div>
<div class="t" style="left:591.7px;top:469px;transform:scaleX(0.873);color:#00007b">100 %</div>
<div class="t" style="left:501.6px;top:485px;transform:scaleX(0.893)">Position:</div>
<div class="t" style="left:578.8px;top:485px;transform:scaleX(0.873);color:#00007b">4463 MB</div>
<div class="t" style="left:501.6px;top:500px;transform:scaleX(0.917)">Speed:</div>
<div class="t" style="left:590.3px;top:500px;transform:scaleX(0.915);color:#00007b">8.37 X</div>
<div class="t" style="left:35.1px;top:454px;transform:scaleX(0.857)">PI Errors</div>
<div class="t" style="left:22.5px;top:470px;transform:scaleX(0.877)">Average:</div>
<div class="t" style="left:123.3px;top:470px;transform:scaleX(0.841);color:#00007b">28.61</div>
<div class="t" style="left:21.6px;top:485px;transform:scaleX(0.857)">Maximum:</div>
<div class="t" style="left:137.7px;top:485px;transform:scaleX(0.933);color:#00007b">70</div>
<div class="t" style="left:22.5px;top:500px;transform:scaleX(0.907)">Total:</div>
<div class="t" style="left:114.8px;top:500px;transform:scaleX(0.875);color:#00007b">436272</div>
<div class="t" style="left:193.2px;top:454px;transform:scaleX(0.850)">PI Failures</div>
<div class="t" style="left:181.5px;top:470px;transform:scaleX(0.881)">Average:</div>
<div class="t" style="left:287.9px;top:470px;transform:scaleX(0.909);color:#00007b">2.94</div>
<div class="t" style="left:180.6px;top:485px;transform:scaleX(0.853)">Maximum:</div>
<div class="t" style="left:296.7px;top:485px;transform:scaleX(0.933);color:#00007b">30</div>
<div class="t" style="left:181.5px;top:500px;transform:scaleX(0.900)">Total:</div>
<div class="t" style="left:280.1px;top:500px;transform:scaleX(0.870);color:#00007b">40237</div>
<div class="t" style="left:352.0px;top:454px;transform:scaleX(0.842)">Jitter</div>
<div class="t" style="left:340.2px;top:470px;transform:scaleX(0.887)">Average:</div>
<div class="t" style="left:436.8px;top:470px;transform:scaleX(0.851);color:#00007b">8.51 %</div>
<div class="t" style="left:339.3px;top:485px;transform:scaleX(0.858)">Maximum:</div>
<div class="t" style="left:435.4px;top:485px;transform:scaleX(0.914);color:#00007b">11.0 %</div>
<div class="t" style="left:339.3px;top:504px;transform:scaleX(0.867)">PO failures:</div>
<div class="t" style="left:462.5px;top:504px;transform:scaleX(0.967);color:#00007b">0</div>
<div class="t" style="left:30.0px;top:233px;transform:scaleX(0.885)">20</div>
<div class="t" style="left:30.0px;top:206px;transform:scaleX(0.885)">40</div>
<div class="t" style="left:30.0px;top:180px;transform:scaleX(0.885)">60</div>
<div class="t" style="left:30.0px;top:153px;transform:scaleX(0.885)">80</div>
<div class="t" style="left:23.8px;top:126px;transform:scaleX(0.885)">100</div>
<div class="t" style="left:30.0px;top:395px;transform:scaleX(0.885)">10</div>
<div class="t" style="left:30.0px;top:368px;transform:scaleX(0.885)">20</div>
<div class="t" style="left:30.0px;top:342px;transform:scaleX(0.885)">30</div>
<div class="t" style="left:30.0px;top:315px;transform:scaleX(0.885)">40</div>
<div class="t" style="left:30.0px;top:288px;transform:scaleX(0.885)">50</div>
<div class="t" style="left:470.9px;top:243px;transform:scaleX(0.885)">2</div>
<div class="t" style="left:471.8px;top:226px;transform:scaleX(0.885)">4</div>
<div class="t" style="left:470.9px;top:210px;transform:scaleX(0.885)">6</div>
<div class="t" style="left:471.8px;top:193px;transform:scaleX(0.885)">8</div>
<div class="t" style="left:470.9px;top:176px;transform:scaleX(0.885)">10</div>
<div class="t" style="left:470.9px;top:160px;transform:scaleX(0.885)">12</div>
<div class="t" style="left:470.9px;top:143px;transform:scaleX(0.885)">14</div>
<div class="t" style="left:470.9px;top:126px;transform:scaleX(0.885)">16</div>
<div class="t" style="left:471.8px;top:395px;transform:scaleX(0.885)">4</div>
<div class="t" style="left:471.8px;top:368px;transform:scaleX(0.885)">8</div>
<div class="t" style="left:470.9px;top:342px;transform:scaleX(0.885)">12</div>
<div class="t" style="left:470.9px;top:315px;transform:scaleX(0.885)">16</div>
<div class="t" style="left:470.9px;top:288px;transform:scaleX(0.885)">20</div>
<div class="t" style="left:42.7px;top:270px;transform:scaleX(0.885)">0.0</div>
<div class="t" style="left:89.2px;top:270px;transform:scaleX(0.885)">0.5</div>
<div class="t" style="left:135.2px;top:270px;transform:scaleX(0.885)">1.0</div>
<div class="t" style="left:181.6px;top:270px;transform:scaleX(0.885)">1.5</div>
<div class="t" style="left:228.1px;top:270px;transform:scaleX(0.885)">2.0</div>
<div class="t" style="left:274.5px;top:270px;transform:scaleX(0.885)">2.5</div>
<div class="t" style="left:320.9px;top:270px;transform:scaleX(0.885)">3.0</div>
<div class="t" style="left:367.4px;top:270px;transform:scaleX(0.885)">3.5</div>
<div class="t" style="left:414.3px;top:270px;transform:scaleX(0.885)">4.0</div>
<div class="t" style="left:460.7px;top:270px;transform:scaleX(0.885)">4.5</div>
<div class="t" style="left:42.7px;top:432px;transform:scaleX(0.885)">0.0</div>
<div class="t" style="left:89.2px;top:432px;transform:scaleX(0.885)">0.5</div>
<div class="t" style="left:135.2px;top:432px;transform:scaleX(0.885)">1.0</div>
<div class="t" style="left:181.6px;top:432px;transform:scaleX(0.885)">1.5</div>
<div class="t" style="left:228.1px;top:432px;transform:scaleX(0.885)">2.0</div>
<div class="t" style="left:274.5px;top:432px;transform:scaleX(0.885)">2.5</div>
<div class="t" style="left:320.9px;top:432px;transform:scaleX(0.885)">3.0</div>
<div class="t" style="left:367.4px;top:432px;transform:scaleX(0.885)">3.5</div>
<div class="t" style="left:414.3px;top:432px;transform:scaleX(0.885)">4.0</div>
<div class="t" style="left:460.7px;top:432px;transform:scaleX(0.885)">4.5</div>
</div>
</body></html>
